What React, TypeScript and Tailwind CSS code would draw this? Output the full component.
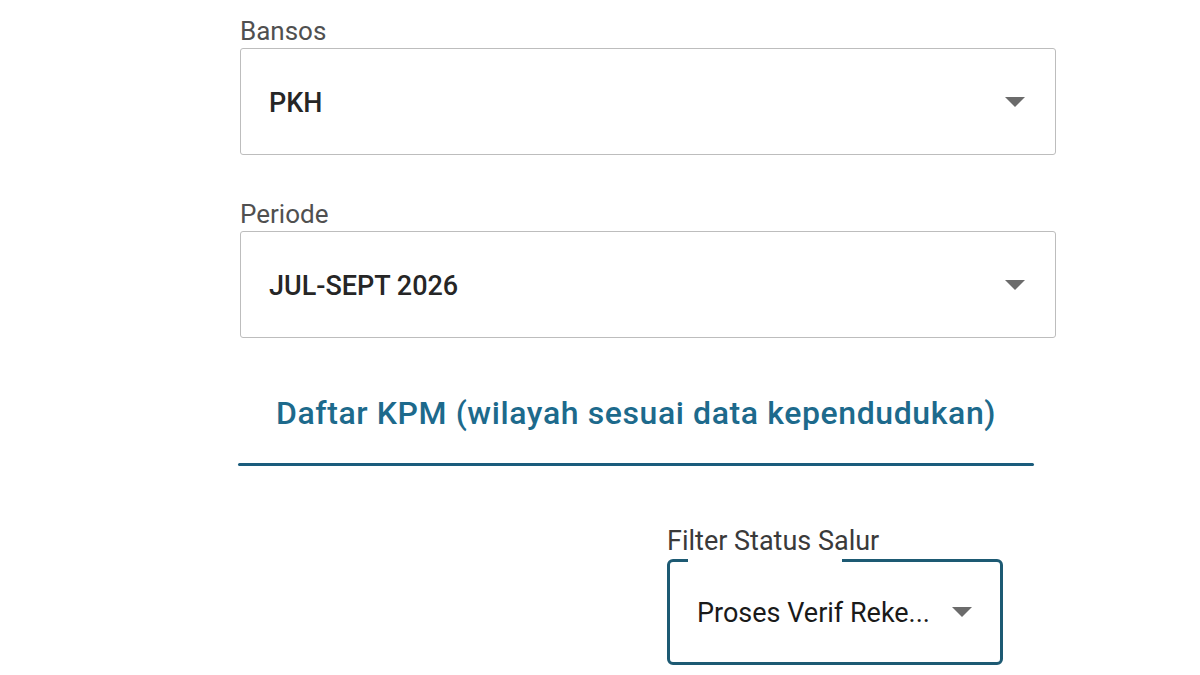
import React from 'react';

function Caret({ className }: { className?: string }) {
  return (
    <svg width="20" height="10" viewBox="0 0 20 10" className={className}>
      <path d="M0 0 L20 0 L10 10 Z" fill="#6b6b6b" />
    </svg>
  );
}

function SelectField({ label, value }: { label: string; value: string }) {
  return (
    <div className="flex flex-col">
      <label className="text-[26px] leading-[30px] text-[#505050] h-[32px]">{label}</label>
      <div className="h-[107px] border border-[#bdbdbd] rounded-[3px] flex items-center justify-between pl-[28px] pr-[30px]">
        <span className="text-[27px] font-medium text-[#262626] pt-[4px]">{value}</span>
        <Caret />
      </div>
    </div>
  );
}

export default function App() {
  return (
    <div className="w-[1200px] h-[675px] bg-white overflow-hidden" style={{ fontFamily: 'Roboto, "Noto Sans", sans-serif' }}>
      <div className="ml-[240px] w-[816px] pt-[16px] flex flex-col">
        <SelectField label="Bansos" value="PKH" />
        <div className="h-[44px]" />
        <SelectField label="Periode" value="JUL-SEPT 2026" />

        <div className="w-[796px] -ml-[2px] mt-[45px]">
          <div className="h-[80px] flex items-start justify-center pt-[10px]">
            <span className="text-[32px] leading-[40px] font-medium text-[#1d6a8c] tracking-[0.6px]">
              Daftar KPM (wilayah sesuai data kependudukan)
            </span>
          </div>
          <div className="h-[3px] bg-[#1a5c7c] rounded-full" />
        </div>

        <div className="ml-[427px] mt-[62px] w-[336px] flex flex-col">
          <label className="text-[27px] leading-[30px] text-[#3a3a3a] h-[35px] -mt-[4px] pt-[2px]">Filter Status Salur</label>
          <div className="relative h-[106px] border-[3px] border-[#1d5a73] rounded-[6px] flex items-center justify-between pl-[27px] pr-[28px]">
            <div className="absolute -top-[4px] left-[18px] w-[154px] h-[5px] bg-white" />
            <span className="text-[27px] text-[#1a1a1a] pt-[2px]">Proses Verif Reke...</span>
            <Caret />
          </div>
        </div>
      </div>
    </div>
  );
}
